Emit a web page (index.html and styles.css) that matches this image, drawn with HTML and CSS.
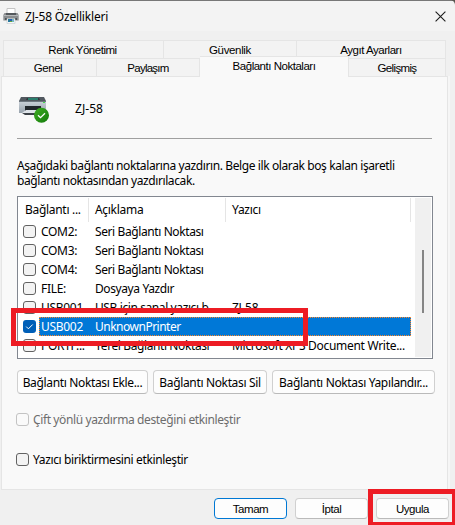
FILE: index.html
```html
<!DOCTYPE html>
<html lang="tr">
<head>
<meta charset="utf-8">
<title>ZJ-58 Özellikleri</title>
<link rel="stylesheet" href="styles.css">
</head>
<body>
<div class="window">
  <header class="titlebar">
    <svg class="app-icon" width="16" height="16" viewBox="0 0 16 16">
      <path d="M4 .5h8v6H4z" fill="#fff" stroke="#c4c4c4"/>
      <path d="M1.500 5h13l1.200 2v5.500H.3V7z" fill="#8b8e90"/>
      <path d="M3 5h10v3H3z" fill="#54585c"/>
      <path d="M.5 7.500h15" stroke="#b5b8ba"/>
      <path d="M2 10h12v2H2z" fill="#4f5357"/>
      <path d="M4 10.500h8v5H4z" fill="#f4f7f8" stroke="#c5c9cb" stroke-width=".6"/>
      <path d="M5 11h2v3H5z" fill="#29779b"/><path d="M7 11h2v2H7z" fill="#275db2"/><path d="M9 11h2v3H9z" fill="#72b8c5"/>
      <path d="M7 13h2v1H7z" fill="#6ba53a"/>
    </svg>
    <h1 class="title">ZJ-58 Özellikleri</h1>
    <svg class="close" width="11" height="11" viewBox="0 0 11 11"><path d="M.6.600l9.800 9.800M10.400.600L.600 10.400" stroke="#1c1c1c" stroke-width="1.100"/></svg>
  </header>

  <nav class="tabs">
    <div class="tab-row back">
      <span class="tab t-color">Renk Yönetimi</span><span class="tab t-security">Güvenlik</span><span class="tab t-device">Aygıt Ayarları</span>
    </div>
    <div class="tab-row front">
      <span class="tab t-general">Genel</span><span class="tab t-share">Paylaşım</span><span class="tab active">Bağlantı Noktaları</span><span class="tab t-advanced">Gelişmiş</span>
    </div>
  </nav>

  <main class="panel">
    <div class="printer">
      <svg width="32" height="32" viewBox="0 0 32 32">
        <defs>
          <linearGradient id="body" x1="0" y1="0" x2="0" y2="1"><stop offset="0" stop-color="#cbd2d9"/><stop offset="1" stop-color="#98a3ad"/></linearGradient>
          <linearGradient id="ok" x1="0" y1="0" x2="1" y2="1"><stop offset="0" stop-color="#3fae22"/><stop offset="1" stop-color="#137a0c"/></linearGradient>
        </defs>
        <path d="M3 3h23l2 4H1z" fill="#525960"/>
        <path d="M9 4h12l1 2H8z" fill="#30363b"/><path d="M10 4.500h10v1H10z" fill="#27c9a2"/>
        <path d="M1 7h27v12H1z" fill="url(#body)"/>
        <path d="M1 7h27v1H1z" fill="#6e7780"/>
        <path d="M7 12h16v5H7z" fill="#22272c"/>
        <path d="M8 16h14l1 3H4z" fill="#dfe4e9"/>
        <path d="M4 19h18v2H7z" fill="#3c4248"/>
        <path d="M25 8h2v1h-2z" fill="#42dd4a"/>
        <circle cx="23.500" cy="21.200" r="7.500" fill="url(#ok)"/>
        <path d="M20 21.200l2.500 2.500 4.500-4.500" fill="none" stroke="#fff" stroke-width="1.300"/>
      </svg>
      <span class="printer-name">ZJ-58</span>
    </div>
    <hr class="rule">
    <p class="intro"><span class="line">Aşağıdaki bağlantı noktalarına yazdırın. Belge ilk olarak boş kalan işaretli</span><span class="line">bağlantı noktasından yazdırılacak.</span></p>

    <section class="list">
      <div class="table">
        <div class="head"><span>Bağlantı ...</span><span>Açıklama</span><span>Yazıcı</span></div>
        <div class="row"><i class="check"></i><span class="port">COM2:</span><span class="desc">Seri Bağlantı Noktası</span></div>
        <div class="row"><i class="check"></i><span class="port">COM3:</span><span class="desc">Seri Bağlantı Noktası</span></div>
        <div class="row"><i class="check"></i><span class="port">COM4:</span><span class="desc">Seri Bağlantı Noktası</span></div>
        <div class="row"><i class="check"></i><span class="port">FILE:</span><span class="desc">Dosyaya Yazdır</span></div>
        <div class="row"><i class="check"></i><span class="port">USB001</span><span class="desc">USB için sanal yazıcı b...</span><span class="dev">ZJ-58</span></div>
        <div class="row"><i class="check on"><svg width="13" height="13" viewBox="0 0 13 13"><path d="M3.200 6.600l2.200 2.200 4.300-4.300" fill="none" stroke="#fff"/></svg></i><div class="selection"><span class="port">USB002</span><span class="desc unknown">UnknownPrinter</span></div></div>
        <div class="row"><i class="check"></i><span class="port">PORTP...</span><span class="desc">Yerel Bağlantı Noktası</span><span class="dev">Microsoft XPS Document Write...</span></div>
      </div>
      <div class="scrollbar"><div class="thumb"></div></div>
    </section>

    <div class="actions">
      <button class="btn add">Bağlantı Noktası Ekle...</button>
      <button class="btn delete">Bağlantı Noktası Sil</button>
      <button class="btn configure">Bağlantı Noktası Yapılandır...</button>
    </div>
    <label class="option disabled"><i class="check"></i><span>Çift yönlü yazdırma desteğini etkinleştir</span></label>
    <label class="option"><i class="check"></i><span>Yazıcı biriktirmesini etkinleştir</span></label>
  </main>

  <footer class="footer">
    <button class="btn small primary">Tamam</button>
    <button class="btn small">İptal</button>
    <button class="btn small">Uygula</button>
  </footer>
  <div class="mark mark-row"></div>
  <div class="mark mark-apply"></div>
</div>
</body>
</html>
```
FILE: styles.css
```css
* { box-sizing: border-box; }
body { margin: 0; background: #56544f; }
.window {
  position: relative; width: 455px; height: 525px; padding-top: 1px; overflow: hidden;
  font: 12px/15px "Noto Sans", sans-serif; letter-spacing: -.4px; color: #000; white-space: nowrap;
  background: linear-gradient(#777 1px, #f0f0f0 1px); border-top-right-radius: 5px;
}
.titlebar { height: 30px; display: flex; align-items: center; background: #f3f3f3; padding: 0 9px 0 3px; border-top-right-radius: 6px; }
.app-icon { margin-right: 6px; }
.title { margin: 0; font-size: 12px; font-weight: 400; flex: 1; letter-spacing: -.18px; }
.tabs { margin: 9px 0 0 3px; width: 443px; font: 11.5px/18px "Liberation Sans", sans-serif; letter-spacing: -.48px; }
.tab-row { display: flex; height: 18px; }
.tab { border: solid #e5e5e5; border-width: 1px 1px 0 0; background: #f3f3f3; text-align: center; }
.tab:first-child { border-left-width: 1px; }
.t-color { width: 161px; padding-right: 2px; }
.t-security { width: 133px; letter-spacing: -.35px; }
.t-device { width: 149px; }
.t-general { width: 94px; padding-right: 4px; letter-spacing: -.45px; }
.t-share { width: 103px; letter-spacing: -.75px; }
.active { width: 149px; height: 21px; margin-top: -2px; background: #f9f9f9; z-index: 1; }
.t-advanced { width: 97px; letter-spacing: -.65px; }
.panel { margin-left: 1px; width: 447px; height: 414px; background: #f9f9f9; border: 1px solid #e5e5e5; padding: 17px 0 0 15px; box-shadow: 2px 0 #f6f6f6; }
.printer { display: flex; align-items: center; height: 32px; }
.printer svg { margin-left: 1px; }
.printer-name { margin: 0 0 3px 25px; letter-spacing: .05px; }
.rule { width: 415px; height: 1px; margin: 12px 0 0; border: 0; background: #a0a0a0; }
.intro { margin: 19px 0 0; }
.line { display: block; }
.list { width: 416px; height: 163px; margin-top: 8px; border: 1px solid #828790; background: #fff; display: flex; padding: 1px 1px 1px 0; overflow: hidden; }
.table { width: 396px; overflow: hidden; }
.head { display: flex; width: 393px; height: 24px; line-height: 24px; letter-spacing: -.3px; }
.head span { border-right: 1px solid #e5e5e5; padding-left: 6px; }
.head span:nth-child(1) { width: 71px; padding-left: 7px; }
.head span:nth-child(2) { width: 137px; }
.head span:nth-child(3) { width: 185px; }
.row { display: flex; align-items: center; height: 19px; width: 393px; padding-left: 5px; }
.check { display: block; flex: none; width: 13px; height: 13px; border: 1px solid #626262; border-radius: 3px; background: #f3f3f3; }
.check.on { border: 0; background: #005fb8; }
.check svg { display: block; }
.port { width: 51px; padding-left: 2px; margin-left: 3px; line-height: 19px; letter-spacing: -.3px; }
.desc { width: 140px; padding-left: 5px; line-height: 19px; }
.dev { padding-left: 2px; line-height: 19px; letter-spacing: -.3px; }
.selection { display: flex; flex: 1; height: 19px; margin-left: 3px; color: #fff; background: #0078d7; outline: 1px dotted #ff8728; outline-offset: -1px; }
.selection .port { margin-left: 0; }
.unknown { letter-spacing: -.5px; }
.scrollbar { width: 16px; margin-left: auto; background: #f0f0f0; padding: 52px 0 0 7px; }
.thumb { width: 2px; height: 63px; background: #858585; }
.actions { display: flex; gap: 5px; margin-top: 11px; }
.btn { height: 24px; padding: 0; border: 1px solid #d0d0d0; border-bottom-color: #bababa; border-radius: 4px; background: #fdfdfd; font: inherit; letter-spacing: -.35px; color: #000; }
.add { width: 131px; }
.delete { width: 114px; }
.configure { width: 163px; }
.option { display: flex; align-items: center; height: 15px; margin: 18px 0 25px -1px; letter-spacing: -.38px; }
.option + .option { margin: 0 0 0 -1px; }
.option span { margin-left: 4px; }
.disabled { color: #6d6d6d; }
.disabled .check { border-color: #c3c3c3; background: #fafafa; }
.footer { display: flex; gap: 8px; margin: 8px 0 0 214px; }
.small { width: 73px; height: 21px; padding-top: 1px; font: 11.5px/15px "Liberation Sans", sans-serif; letter-spacing: -.45px; }
.primary { border-color: #0078d4; }
.mark { position: absolute; border: 5px solid #ed1c24; }
.mark-row { left: 11px; top: 308px; width: 297px; height: 38px; }
.mark-apply { left: 368px; top: 489px; width: 87px; height: 36px; border-width: 5px 3px 3px 5px; }
```
